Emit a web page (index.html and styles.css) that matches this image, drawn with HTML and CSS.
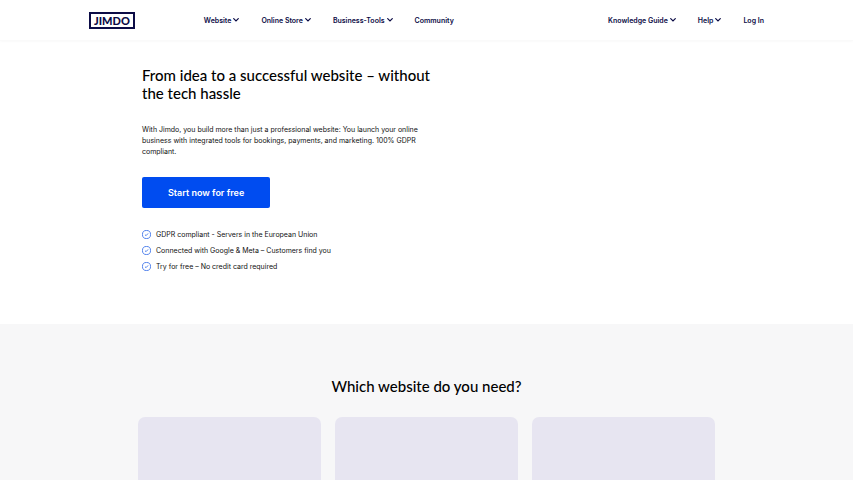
FILE: index.html
```html
<!DOCTYPE html>
<html lang="en">
<head>
<meta charset="utf-8">
<title>Jimdo</title>
<meta name="viewport" content="width=device-width, initial-scale=1">
<link rel="stylesheet" href="styles.css">
</head>
<body>

<header class="header">
  <div class="header-inner">
    <a class="logo" href="#">JIMDO</a>
    <nav class="nav nav-main">
      <button class="nav-item" type="button">Website
        <svg class="chevron" viewBox="0 0 6 4"><path d="M.7.7 3 3 5.3.7"/></svg>
      </button>
      <button class="nav-item" type="button">Online Store
        <svg class="chevron" viewBox="0 0 6 4"><path d="M.7.7 3 3 5.3.7"/></svg>
      </button>
      <button class="nav-item" type="button">Business-Tools
        <svg class="chevron" viewBox="0 0 6 4"><path d="M.7.7 3 3 5.3.7"/></svg>
      </button>
      <a class="nav-item" href="#">Community</a>
    </nav>
    <nav class="nav">
      <button class="nav-item" type="button">Knowledge Guide
        <svg class="chevron" viewBox="0 0 6 4"><path d="M.7.7 3 3 5.3.7"/></svg>
      </button>
      <button class="nav-item" type="button">Help
        <svg class="chevron" viewBox="0 0 6 4"><path d="M.7.7 3 3 5.3.7"/></svg>
      </button>
      <a class="nav-item" href="#">Log In</a>
    </nav>
  </div>
</header>

<main>
  <section class="hero">
    <div class="hero-text">
      <h1>From idea to a successful website – without the tech hassle</h1>
      <p>With Jimdo, you build more than just a professional website: You launch your online business with integrated tools for bookings, payments, and marketing. 100% GDPR compliant.</p>
      <a class="cta" href="#">Start now for free</a>
      <ul class="benefits">
        <li>
          <svg class="check" viewBox="0 0 10 10"><circle cx="5" cy="5" r="4.5"/><path d="M3.3 5.2 4.5 6.3 6.8 3.8"/></svg>
          GDPR compliant - Servers in the European Union
        </li>
        <li>
          <svg class="check" viewBox="0 0 10 10"><circle cx="5" cy="5" r="4.5"/><path d="M3.3 5.2 4.5 6.3 6.8 3.8"/></svg>
          Connected with Google &amp; Meta – Customers find you
        </li>
        <li>
          <svg class="check" viewBox="0 0 10 10"><circle cx="5" cy="5" r="4.5"/><path d="M3.3 5.2 4.5 6.3 6.8 3.8"/></svg>
          Try for free – No credit card required
        </li>
      </ul>
    </div>
  </section>

  <section class="choose">
    <h2>Which website do you need?</h2>
    <div class="cards">
      <div class="card"></div>
      <div class="card"></div>
      <div class="card"></div>
    </div>
  </section>
</main>

</body>
</html>
```
FILE: styles.css
```css
body {
  display: flex;
  flex-direction: column;
  min-height: 100vh;
  margin: 0;
  font-family: Inter, "Liberation Sans", sans-serif;
  font-size: 7px;
  line-height: 11px;
  color: #111;
  background: #fff;
}

a {
  color: inherit;
  text-decoration: none;
}

.header {
  border-bottom: 1px solid #fafafa;
  box-shadow: 0 1px 2px #fafafa;
}

.header-inner {
  display: flex;
  align-items: center;
  height: 40px;
  max-width: 675px;
  margin: 0 auto;
}

.logo {
  padding: 1px 3px;
  border: 2px solid #0c0c46;
  color: #0c0c46;
  font-family: Lato, sans-serif;
  font-size: 11px;
  font-weight: 900;
}

.nav {
  display: flex;
  gap: 22px;
}

.nav-main {
  flex: 1;
  margin-left: 69px;
}

.nav-item {
  display: flex;
  align-items: center;
  gap: 2px;
  padding: 0;
  border: 0;
  background: none;
  color: #0c0c46;
  font: inherit;
  font-weight: 600;
  white-space: nowrap;
  cursor: pointer;
}

.chevron {
  width: 6px;
  height: 4px;
  fill: none;
  stroke: #0c0c46;
  stroke-width: 1.2;
  stroke-linecap: round;
}

main {
  flex: 1;
  display: flex;
  flex-direction: column;
}

.hero {
  box-sizing: border-box;
  width: 100%;
  max-width: 569px;
  margin: 0 auto;
  padding: 25px 0 52px;
}

.hero-text {
  max-width: 290px;
}

h1,
h2 {
  margin: 0;
  color: #000;
  font-family: Lato, "Liberation Sans", sans-serif;
  font-size: 15px;
  line-height: 18px;
  font-weight: 500;
}

.hero p {
  margin: 22px 0 20px;
}

.cta {
  display: inline-block;
  padding: 10px 26px;
  border-radius: 2px;
  background: #004cf0;
  color: #fff;
  font-size: 9px;
  font-weight: 600;
}

.benefits {
  display: grid;
  gap: 5px;
  margin: 21px 0 0;
  padding: 0;
  list-style: none;
}

.benefits li {
  display: flex;
  align-items: center;
  gap: 5px;
}

.check {
  width: 9px;
  height: 9px;
  fill: none;
  stroke: #2b67e8;
  stroke-width: .9;
}

.choose {
  flex: 1;
  display: flex;
  flex-direction: column;
  padding: 53px 20px 0;
  background: #f7f7f8;
}

.choose h2 {
  text-align: center;
}

.cards {
  flex: 1;
  display: grid;
  grid-template-columns: repeat(3, 1fr);
  gap: 14px;
  width: 100%;
  max-width: 578px;
  margin: 22px auto 0;
}

.card {
  border-radius: 7px 7px 0 0;
  background: #e7e5f1;
}
```
